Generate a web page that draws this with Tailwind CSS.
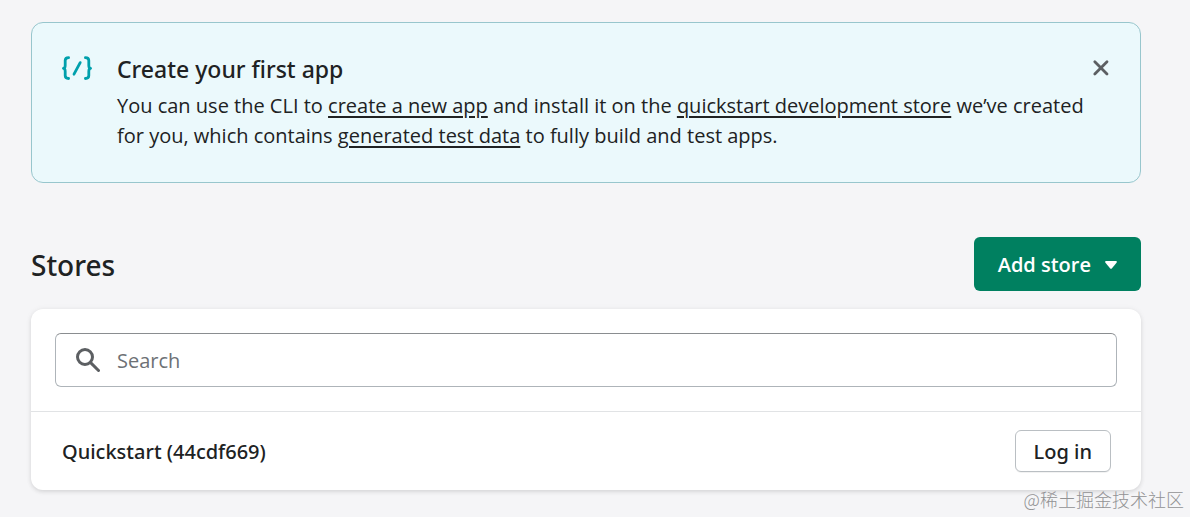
<!DOCTYPE html>
<html lang="en">
  <head>
    <meta charset="UTF-8" />
    <meta name="viewport" content="width=device-width, initial-scale=1.0" />
    <title>Stores</title>
    <script src="https://cdn.jsdelivr.net/npm/@tailwindcss/browser@4"></script>
  </head>
  <body
    class="relative min-h-screen overflow-x-hidden bg-[#f5f5f7] font-['Noto_Sans',sans-serif] text-[20px] text-[#202223]"
  >
    <main class="pt-[22px] pr-[49px] pb-[26px] pl-[31px]">
      <section
        class="flex items-start rounded-xl border border-[#98c6cd] bg-[#ebf9fc] px-[29px] pt-[30px] pb-[31px]"
      >
        <svg
          class="mt-px h-[30px] w-8 shrink-0"
          viewBox="0 0 32 30"
          fill="none"
          stroke="#00a0ac"
          stroke-width="2.8"
          stroke-linecap="round"
          stroke-linejoin="round"
          aria-hidden="true"
        >
          <path d="M7.6 3.7Q4.2 3.7 4.2 6.6V11.5Q4.2 14.2 2.4 14.4Q4.2 14.6 4.2 17.4V21.6Q4.2 24.5 7.6 24.5" />
          <path d="M24.4 3.7Q27.8 3.7 27.8 6.6V11.5Q27.8 14.2 29.6 14.4Q27.8 14.6 27.8 17.4V21.6Q27.8 24.5 24.4 24.5" />
          <path d="M19.2 8.6L13 20.2" />
        </svg>
        <div class="ml-6 min-w-0 flex-1">
          <h2 class="text-[23px] leading-8 font-medium">
            Create your first app
          </h2>
          <p class="mt-[6px] font-['Open_Sans',sans-serif] leading-[30px]">
            You can use the CLI to
            <a href="#" class="underline decoration-2 underline-offset-3">create a new app</a>
            and install it on the
            <a href="#" class="underline decoration-2 underline-offset-3">quickstart development store</a>
            we’ve created for you, which contains
            <a href="#" class="underline decoration-2 underline-offset-3">generated test data</a>
            to fully build and test apps.
          </p>
        </div>
        <button type="button" aria-label="Dismiss" class="h-[30px] w-[20px] shrink-0">
          <svg
            class="h-[30px] w-[20px]"
            viewBox="0 0 20 30"
            fill="none"
            stroke="#5c5f62"
            stroke-width="2.8"
            stroke-linecap="round"
            aria-hidden="true"
          >
            <path d="M3.8 8.8L16 21M16 8.8L3.8 21" />
          </svg>
        </button>
      </section>

      <div class="mt-[54px] flex items-center justify-between">
        <h1 class="pt-[2px] text-[28px] leading-9 font-medium">Stores</h1>
        <button
          type="button"
          class="flex h-[54px] items-center rounded-md bg-[#008060] px-6 pt-[2px] font-['Open_Sans',sans-serif] font-semibold text-white"
        >
          Add store
          <svg class="ml-[14px] h-2 w-3" viewBox="0 0 12 8" fill="#fff" aria-hidden="true">
            <path d="M1.2 0H10.8Q12.6 .2 11.5 1.8L7 7.2Q6 8.2 5 7.2L.5 1.8Q-.6 .2 1.2 0Z" />
          </svg>
        </button>
      </div>

      <section
        class="mt-[18px] rounded-xl bg-white shadow-[0_0_6px_rgba(23,24,24,0.05),0_2px_4px_rgba(0,0,0,0.10)]"
      >
        <div class="border-b border-[#e1e3e5] p-6">
          <div
            class="flex h-[54px] items-center rounded-md border border-[#aeb4b9] border-t-[#8a8d90] px-5"
          >
            <svg
              class="h-6 w-6 shrink-0"
              viewBox="0 0 24 24"
              fill="none"
              stroke="#5c5f62"
              stroke-width="3"
              stroke-linecap="round"
              aria-hidden="true"
            >
              <circle cx="9" cy="9" r="7.5" />
              <path d="M14.6 14.6L22.5 22.5" />
            </svg>
            <input
              type="search"
              aria-label="Search"
              placeholder="Search"
              class="ml-[17px] min-w-0 flex-1 bg-transparent pt-[2px] font-['Open_Sans',sans-serif] outline-none placeholder:text-[#6d7175]"
            />
          </div>
        </div>
        <div class="flex items-center justify-between py-[18px] pr-[30px] pl-[31px]">
          <span class="pt-[2px] font-medium">Quickstart (44cdf669)</span>
          <button
            type="button"
            class="h-[42px] rounded-md border border-[#babfc3] bg-white px-[18px] pt-[2px] font-medium shadow-[0_1px_0_rgba(0,0,0,0.05)]"
          >
            Log in
          </button>
        </div>
      </section>
    </main>
    <div
      class="absolute right-[6px] bottom-[6px] font-['Noto_Sans_CJK_SC',sans-serif] text-[18px] leading-6 font-light text-[#929294]"
      lang="zh-CN"
    >
      @稀土掘金技术社区
    </div>
  </body>
</html>
